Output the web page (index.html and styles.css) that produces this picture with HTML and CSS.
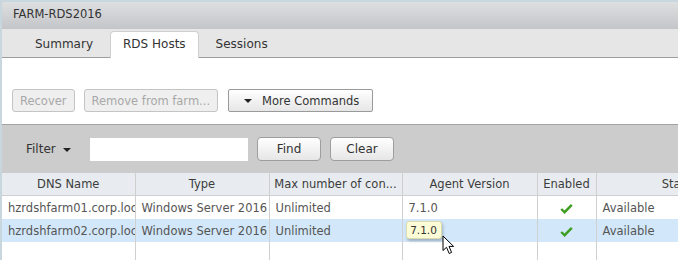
FILE: index.html
```html
<!DOCTYPE html>
<html lang="en">
<head>
  <meta charset="UTF-8">
  <title>FARM-RDS2016</title>
  <link rel="stylesheet" href="styles.css">
</head>
<body>
  <div class="window">
    <div class="title-bar">FARM-RDS2016</div>

    <div class="tabs">
      <span class="tab">Summary</span>
      <span class="tab active">RDS Hosts</span>
      <span class="tab">Sessions</span>
    </div>

    <div class="toolbar">
      <button class="btn disabled">Recover</button>
      <button class="btn disabled">Remove from farm...</button>
      <button class="btn menu-btn"><span class="caret"></span>More Commands</button>
    </div>

    <div class="filter-bar">
      <span class="filter-label">Filter <span class="caret"></span></span>
      <input type="text" class="filter-input">
      <button class="btn round">Find</button>
      <button class="btn round">Clear</button>
    </div>

    <div class="grid-wrap">
      <table class="grid">
        <colgroup>
          <col style="width: 133px">
          <col style="width: 134px">
          <col style="width: 133px">
          <col style="width: 135px">
          <col style="width: 59px">
          <col style="width: 168px">
        </colgroup>
        <thead>
          <tr>
            <th>DNS Name</th>
            <th>Type</th>
            <th>Max number of con...</th>
            <th>Agent Version</th>
            <th>Enabled</th>
            <th>Status</th>
          </tr>
        </thead>
        <tbody>
          <tr>
            <td>hzrdshfarm01.corp.local</td>
            <td>Windows Server 2016</td>
            <td>Unlimited</td>
            <td>7.1.0</td>
            <td class="center"><svg class="check" width="13" height="11" viewBox="0 0 13 11"><path d="M1.2 6 L4.6 9.2 L11.8 1.8" fill="none" stroke="#3e9e22" stroke-width="2.4"/></svg></td>
            <td>Available</td>
          </tr>
          <tr class="selected">
            <td>hzrdshfarm02.corp.local</td>
            <td>Windows Server 2016</td>
            <td>Unlimited</td>
            <td class="has-tip">
              <span class="tooltip">7.1.0</span>
              <svg class="cursor" width="13" height="20" viewBox="0 0 13 20"><path d="M1 1 L1 15.5 L4.5 12.3 L7.2 18.5 L9.6 17.4 L7 11.4 L11.6 11.4 Z" fill="#fff" stroke="#000" stroke-width="1" stroke-linejoin="round"/></svg>
            </td>
            <td class="center"><svg class="check" width="13" height="11" viewBox="0 0 13 11"><path d="M1.2 6 L4.6 9.2 L11.8 1.8" fill="none" stroke="#3e9e22" stroke-width="2.4"/></svg></td>
            <td>Available</td>
          </tr>
          <tr class="empty">
            <td></td><td></td><td></td><td></td><td></td><td></td>
          </tr>
        </tbody>
      </table>
    </div>
  </div>
</body>
</html>
```

FILE: styles.css
```css
body {
  margin: 0;
  padding: 0;
  background-color: #fff;
  font-family: "DejaVu Sans", Verdana, sans-serif;
  font-size: 11.5px;
  color: #333;
}
.window {
  width: 676px;
  height: 258px;
  border-top: 2px solid #c8d8de;
  border-left: 2px solid #c8d6de;
  overflow: hidden;
  background: #fff;
}
.title-bar {
  height: 27px;
  line-height: 25px;
  padding-left: 11px;
  background: linear-gradient(#dedfe1, #c4c5c8);
  color: #333;
  font-size: 11.5px;
}
.tabs {
  height: 28px;
  display: flex;
  align-items: flex-end;
  gap: 4px;
  padding-left: 20px;
  background-color: #e6e6e6;
  border-bottom: 1px solid #9d9d9d;
}
.tab {
  font-size: 12px;
  color: #333;
  padding: 0 12px;
  height: 25px;
  line-height: 24px;
  border: 1px solid transparent;
  border-bottom: none;
}
.tab.active {
  background: #fff;
  border-color: #cfcfcf;
  border-radius: 4px 4px 0 0;
  margin-bottom: -1px;
  height: 26px;
}
.toolbar {
  height: 66px;
  display: flex;
  align-items: flex-start;
  gap: 9px;
  padding: 31px 0 0 10px;
  box-sizing: border-box;
}
.btn {
  font-family: "DejaVu Sans", Verdana, sans-serif;
  font-size: 11.5px;
  color: #333;
  height: 23px;
  padding: 0 7px;
  background: linear-gradient(#ffffff, #e6e6e6);
  border: 1px solid #9a9a9a;
  border-radius: 2px;
}
.btn.disabled {
  color: #a8a8a8;
  background: #efefef;
  border-color: #c4c4c4;
  border-radius: 3px;
}
.menu-btn {
  margin-left: 1px;
  padding: 0 13px 0 15px;
  display: flex;
  align-items: center;
}
.caret {
  display: inline-block;
  width: 0;
  height: 0;
  border-left: 4px solid transparent;
  border-right: 4px solid transparent;
  border-top: 4px solid #222;
  margin-right: 10px;
  vertical-align: middle;
}
.filter-bar {
  height: 48px;
  display: flex;
  align-items: center;
  background-color: #cccccc;
  border-top: 1px solid #a3a3a3;
  padding-left: 24px;
}
.filter-label {
  font-size: 12px;
  color: #333;
  width: 64px;
}
.filter-label .caret {
  margin: 0 0 0 3px;
}
.filter-input {
  width: 158px;
  height: 23px;
  box-sizing: border-box;
  border: none;
  background: #fff;
  margin-right: 9px;
}
.btn.round {
  width: 64px;
  height: 24px;
  border-radius: 4px;
  border-color: #9e9e9e;
  font-size: 12px;
  margin-right: 9px;
}
.grid-wrap {
  width: 676px;
  overflow: hidden;
}
.grid {
  border-collapse: collapse;
  table-layout: fixed;
  width: 762px;
}
.grid th {
  height: 22px;
  padding: 0;
  font-weight: normal;
  color: #3c3c3c;
  background-color: #e8ecf0;
  border-right: 1px solid #cfcfcf;
  border-bottom: 1px solid #cfcfcf;
  text-align: center;
}
.grid td {
  height: 23px;
  padding: 0 6px;
  color: #555;
  white-space: nowrap;
  overflow: hidden;
  border-right: 1px solid #d0d0d0;
}
.grid td.center {
  text-align: center;
}
.grid tr.selected td {
  background-color: #d2e8fa;
}
.check {
  vertical-align: middle;
}
.has-tip {
  position: relative;
  overflow: visible !important;
}
.tooltip {
  position: absolute;
  left: 3px;
  top: 2px;
  width: 36px;
  height: 18px;
  line-height: 17px;
  font-size: 10.5px;
  text-align: center;
  color: #333;
  background-color: #fcfcd6;
  border: 1px solid #dcdcb0;
  border-radius: 3px;
  box-shadow: 1px 2px 3px rgba(0, 0, 0, 0.25);
  box-sizing: border-box;
}
.cursor {
  position: absolute;
  left: 39px;
  top: 16px;
}
```
